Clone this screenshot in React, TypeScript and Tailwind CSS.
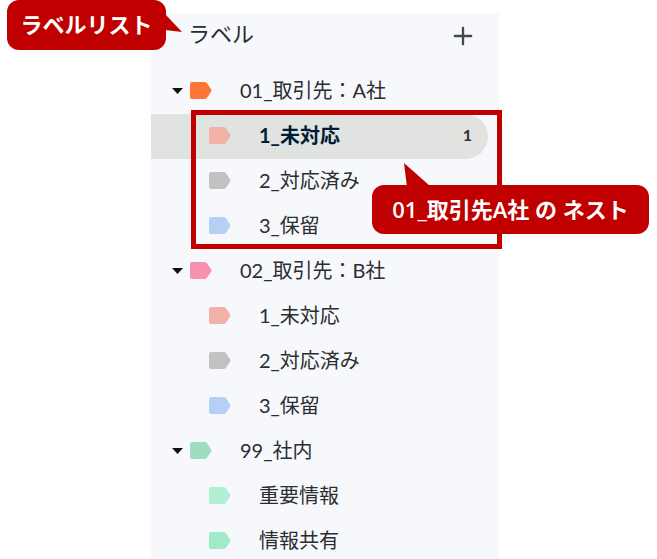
import { Plus } from "lucide-react";

type Label = { name: string; color: string; count?: number };
type LabelGroup = Label & { marked?: boolean; children: Label[] };

const groups: LabelGroup[] = [
  {
    name: "01_取引先：A社",
    color: "text-[#ff7537]",
    marked: true,
    children: [
      { name: "1_未対応", color: "text-[#f2b2a8]", count: 1 },
      { name: "2_対応済み", color: "text-[#c2c2c2]" },
      { name: "3_保留", color: "text-[#b6cff5]" },
    ],
  },
  {
    name: "02_取引先：B社",
    color: "text-[#f691b2]",
    children: [
      { name: "1_未対応", color: "text-[#f2b2a8]" },
      { name: "2_対応済み", color: "text-[#c2c2c2]" },
      { name: "3_保留", color: "text-[#b6cff5]" },
    ],
  },
  {
    name: "99_社内",
    color: "text-[#a0dcc0]",
    children: [
      { name: "重要情報", color: "text-[#b3efd3]" },
      { name: "情報共有", color: "text-[#a0eac9]" },
    ],
  },
];

function TagIcon({ color }: { color: string }) {
  return (
    <svg viewBox="0 0 22 17" className={`h-[17px] w-[22px] shrink-0 ${color}`} aria-hidden="true">
      <path
        fill="currentColor"
        d="M2 0H14.5Q16 0 17 1.3L21.2 7.5Q21.8 8.5 21.2 9.5L17 15.7Q16 17 14.5 17H2Q0 17 0 15V2Q0 0 2 0Z"
      />
    </svg>
  );
}

function LabelRow({ label }: { label: Label }) {
  const active = label.count !== undefined;
  return (
    <li>
      <a
        href="#label"
        className={`mr-[11px] flex h-[45px] items-center rounded-r-full pr-4 pb-0.5 pl-[58px] ${
          active ? "bg-[#e0e3df] font-bold text-[#001d35]" : ""
        }`}
      >
        <TagIcon color={label.color} />
        <span className="ml-7 flex-1 pb-0.5 whitespace-nowrap">{label.name}</span>
        {active && <span className="pb-0.5 text-base text-[#333]">{label.count}</span>}
      </a>
    </li>
  );
}

function NestMarker() {
  return (
    <>
      <div className="pointer-events-none absolute -top-1 -right-[3px] bottom-0 left-10 border-[5px] border-[#c00000]" />
      <div className="absolute top-[71px] -right-[150px] flex h-[49px] w-[277px] items-center justify-center rounded-xl bg-[#c00000] font-['Open_Sans','Noto_Sans_CJK_JP',sans-serif] text-[22px] font-semibold whitespace-nowrap text-white">
        <svg viewBox="0 0 26 24" className="absolute -top-[22px] left-8 h-6 w-[26px]" aria-hidden="true">
          <path fill="#c00000" d="M0 0L26 23V24H3Z" />
        </svg>
        01_取引先A社 の ネスト
      </div>
    </>
  );
}

export default function App() {
  return (
    <main className="relative h-screen overflow-hidden bg-white pt-[14px] pr-[158px] pl-[151px] font-['Lato','Noto_Sans_CJK_JP',sans-serif] text-xl text-[#2b2d30]">
      <nav className="min-h-full bg-[#f6f8fc]">
        {/* Header */}
        <div className="flex h-[55px] items-start justify-between pt-1 pr-[22px] pl-[37px]">
          <h1 className="text-[22px] leading-8">ラベル</h1>
          <button type="button" aria-label="新しいラベルを作成" className="pt-1 text-[#444746]">
            <Plus size={28} strokeWidth={2} />
          </button>
        </div>

        {/* Labels */}
        <ul>
          {groups.map((group) => (
            <li key={group.name}>
              <div className="flex h-[45px] items-center pb-0.5 pl-[21px]">
                <button type="button" aria-label={group.name} className="mr-[7px]">
                  <svg viewBox="0 0 11 6" className="h-[6px] w-[11px]" aria-hidden="true">
                    <path fill="#111" d="M0 0H11L5.5 6Z" />
                  </svg>
                </button>
                <TagIcon color={group.color} />
                <a href="#label" className="ml-7 pb-0.5 whitespace-nowrap">
                  {group.name}
                </a>
              </div>
              <div className="relative">
                <ul>
                  {group.children.map((label) => (
                    <LabelRow key={label.name} label={label} />
                  ))}
                </ul>
                {group.marked && <NestMarker />}
              </div>
            </li>
          ))}
        </ul>
      </nav>

      {/* Callout for the list heading */}
      <div className="absolute top-0 left-[7px] flex h-[50px] w-[159px] items-center justify-center rounded-xl bg-[#c00000] text-[22px] font-bold whitespace-nowrap text-white">
        ラベルリスト
        <svg viewBox="0 0 17 18" className="absolute top-[14px] left-[158px] h-[18px] w-[17px]" aria-hidden="true">
          <path fill="#c00000" d="M0 0L17 18L0 16Z" />
        </svg>
      </div>
    </main>
  );
}
